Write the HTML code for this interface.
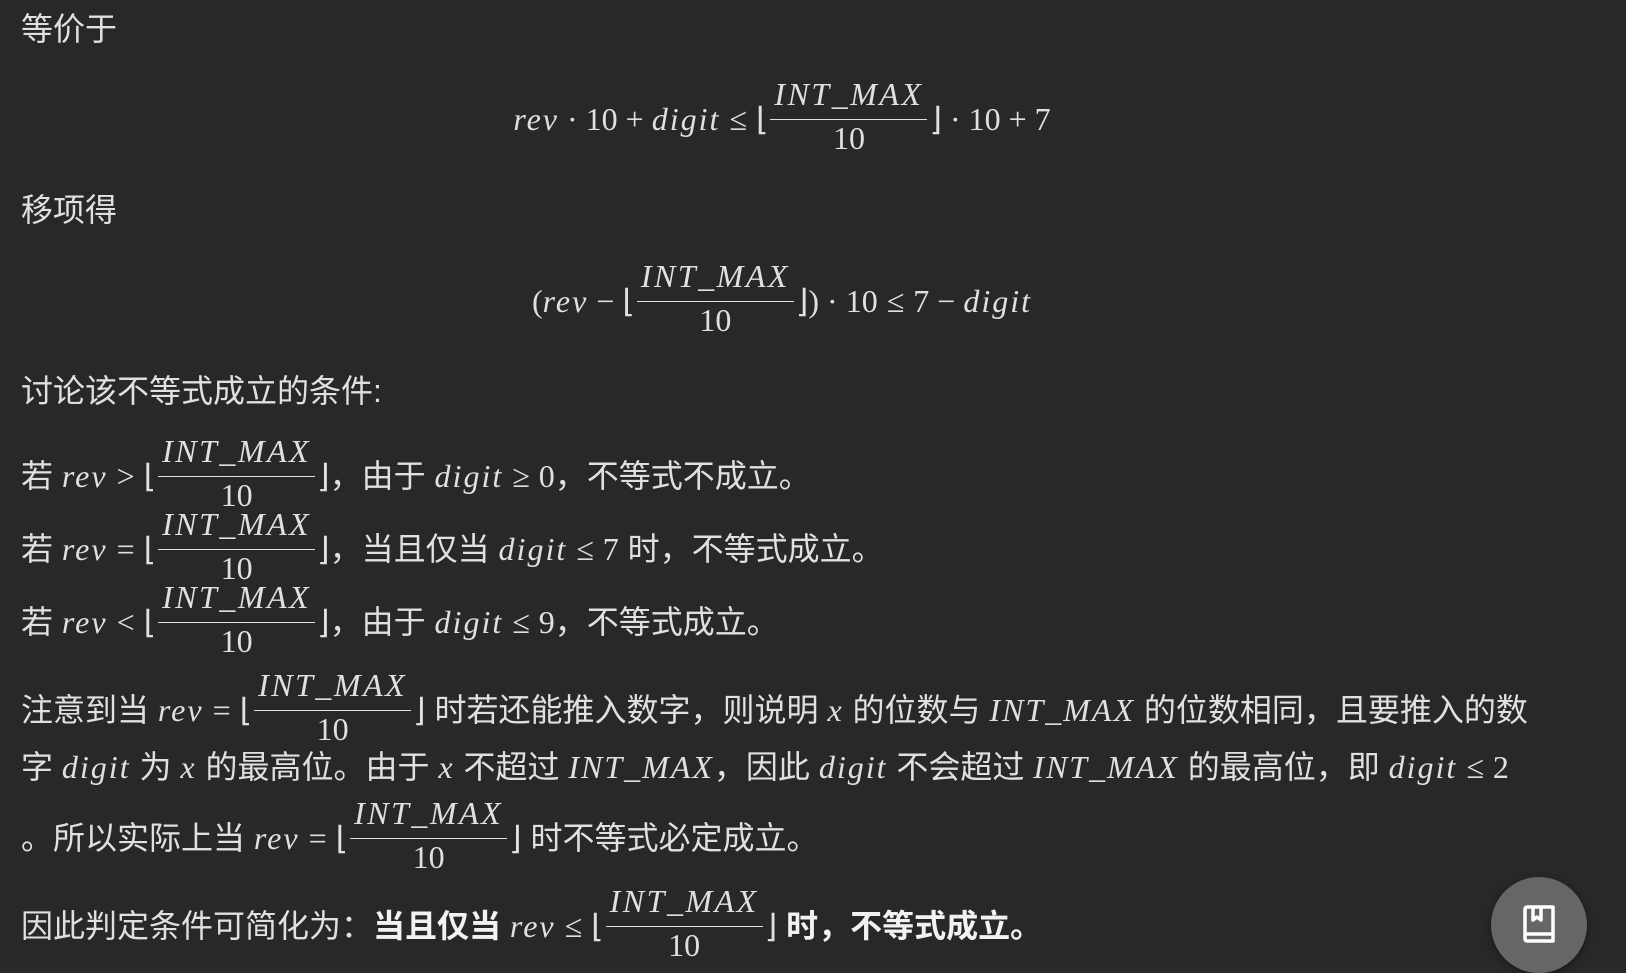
<!DOCTYPE html>
<html><head><meta charset="utf-8"><style>
html,body{margin:0;padding:0}
body{width:1626px;height:954px;background:#282828;color:#e0e0e0;position:relative;overflow:hidden;font-family:"Liberation Sans","Noto Sans CJK SC",sans-serif;font-size:32px}
.l{position:absolute;left:21px;white-space:nowrap;line-height:36px;height:36px}
.c{left:0;width:1564px;text-align:center}
.m{font-family:"Liberation Serif",serif;font-size:32px}
.i{font-family:"Liberation Serif",serif;font-style:italic;font-size:32px;letter-spacing:2px}
.r{font-family:"Liberation Serif",serif;font-size:32px;padding:0 9px}
.bn{font-family:"Liberation Serif",serif;font-size:32px;padding:0 8px}
.frac{display:inline-flex;flex-direction:column;align-items:center;vertical-align:25px;margin:-60px 2px;line-height:30px;font-family:"Liberation Serif",serif;font-size:32px}
.frac .n{font-style:italic;letter-spacing:2.5px;padding:0 4px 9px;border-bottom:1.5px solid #e0e0e0;line-height:32px}
.frac .d{line-height:36px}
b{color:#f2f2f2}
</style></head><body>
<div class="l" style="top:11px">等价于</div>
<div class="l c" style="top:101px"><span class="i">rev</span><span class="bn">·</span><span class="m">10</span><span class="bn">+</span><span class="i">digit</span><span class="r">≤</span><span class="m">⌊</span><span class="frac"><span class="n">INT_MAX</span><span class="d">10</span></span><span class="m">⌋</span><span class="bn">·</span><span class="m">10</span><span class="bn">+</span><span class="m">7</span></div>
<div class="l" style="top:192px">移项得</div>
<div class="l c" style="top:283px"><span class="m">(</span><span class="i">rev</span><span class="bn">−</span><span class="m">⌊</span><span class="frac"><span class="n">INT_MAX</span><span class="d">10</span></span><span class="m">⌋)</span><span class="bn">·</span><span class="m">10</span><span class="r">≤</span><span class="m">7</span><span class="bn">−</span><span class="i">digit</span></div>
<div class="l" style="top:373px">讨论该不等式成立的条件:</div>
<div class="l" style="top:458px">若 <span class="i">rev</span><span class="r">&gt;</span><span class="m">⌊</span><span class="frac"><span class="n">INT_MAX</span><span class="d">10</span></span><span class="m">⌋</span>，由于 <span class="i">digit</span><span class="r">≥</span><span class="m">0</span>，不等式不成立。</div>
<div class="l" style="top:531px">若 <span class="i">rev</span><span class="r">=</span><span class="m">⌊</span><span class="frac"><span class="n">INT_MAX</span><span class="d">10</span></span><span class="m">⌋</span>，当且仅当 <span class="i">digit</span><span class="r">≤</span><span class="m">7</span> 时，不等式成立。</div>
<div class="l" style="top:604px">若 <span class="i">rev</span><span class="r">&lt;</span><span class="m">⌊</span><span class="frac"><span class="n">INT_MAX</span><span class="d">10</span></span><span class="m">⌋</span>，由于 <span class="i">digit</span><span class="r">≤</span><span class="m">9</span>，不等式成立。</div>
<div class="l" style="top:692px">注意到当 <span class="i">rev</span><span class="r">=</span><span class="m">⌊</span><span class="frac"><span class="n">INT_MAX</span><span class="d">10</span></span><span class="m">⌋</span> 时若还能推入数字，则说明 <span class="i">x</span> 的位数与 <span class="i">INT_MAX</span> 的位数相同，且要推入的数</div>
<div class="l" style="top:749px">字 <span class="i">digit</span> 为 <span class="i">x</span> 的最高位。由于 <span class="i">x</span> 不超过 <span class="i">INT_MAX</span>，因此 <span class="i">digit</span> 不会超过 <span class="i">INT_MAX</span> 的最高位，即 <span class="i">digit</span><span class="r">≤</span><span class="m">2</span></div>
<div class="l" style="top:820px">。所以实际上当 <span class="i">rev</span><span class="r">=</span><span class="m">⌊</span><span class="frac"><span class="n">INT_MAX</span><span class="d">10</span></span><span class="m">⌋</span> 时不等式必定成立。</div>
<div class="l" style="top:908px">因此判定条件可简化为：<b>当且仅当</b> <span class="i">rev</span><span class="r">≤</span><span class="m">⌊</span><span class="frac"><span class="n">INT_MAX</span><span class="d">10</span></span><span class="m">⌋</span> <b>时，不等式成立。</b></div>
<div style="position:absolute;left:1491px;top:877px;width:96px;height:96px;border-radius:50%;background:#666;box-shadow:0 2px 8px rgba(0,0,0,.4)">
<svg style="position:absolute;left:30px;top:27px" width="36" height="40" viewBox="0 0 36 40" fill="none" stroke="#fff" stroke-width="3.5" stroke-linejoin="round">
<path d="M4 32V5a2 2 0 0 1 2-2h26v34H6a2 2 0 0 1-2-2v-3a2 2 0 0 1 2-2h26"/>
<path d="M12 3v13l4-3 4 3V3"/>
</svg></div>
</body></html>
